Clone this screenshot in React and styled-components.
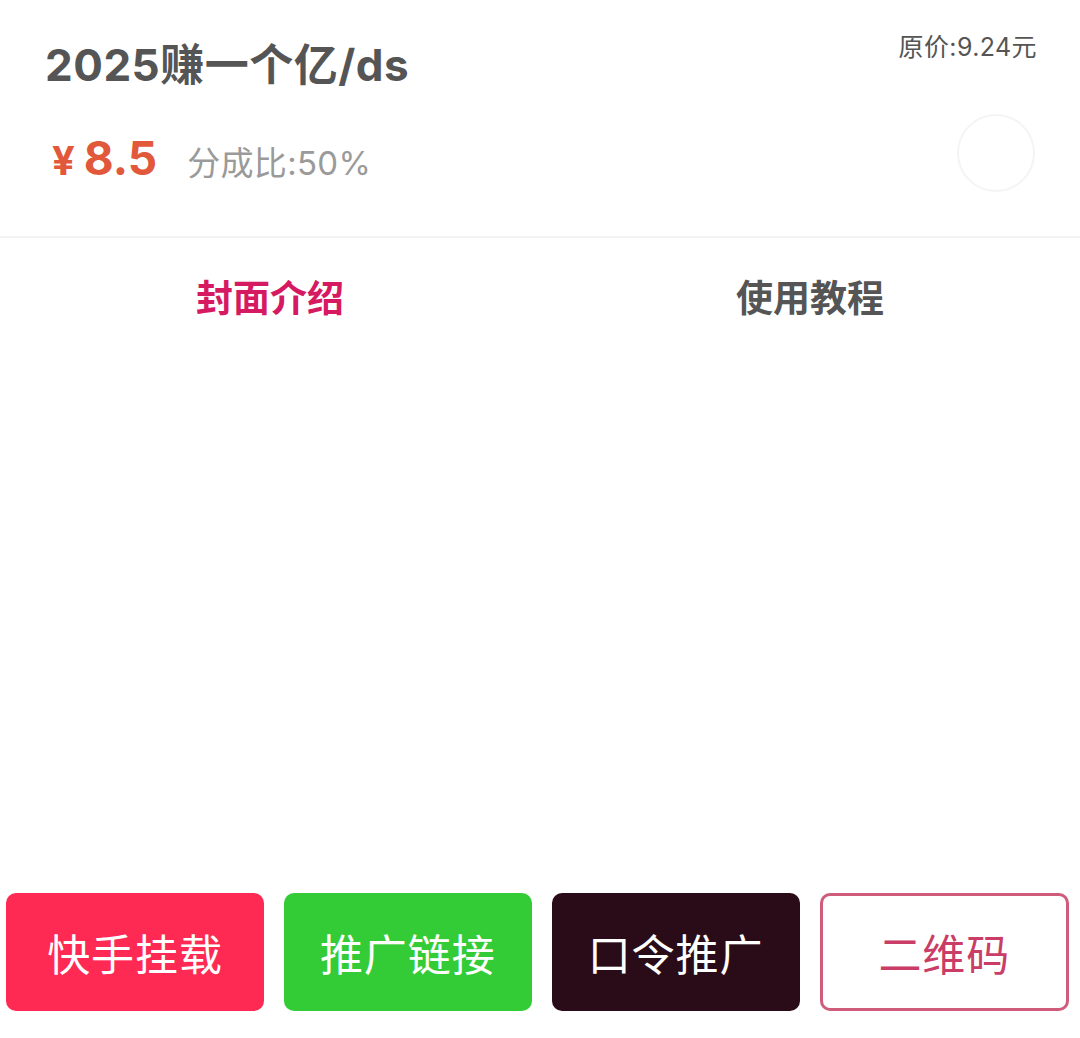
import React from 'react';
import styled, { createGlobalStyle } from 'styled-components';

const GlobalStyle = createGlobalStyle`
  html, body {
    margin: 0;
    padding: 0;
    background: #fff;
  }
  body {
    font-family: Inter, "Noto Sans CJK SC", "Noto Sans", sans-serif;
  }
`;

const Page = styled.div`
  display: flex;
  flex-direction: column;
  min-height: 1038px;
  background: #fff;
`;

const Header = styled.div`
  display: flex;
  justify-content: space-between;
  padding: 33px 43px 44px 45px;
  border-bottom: 2px solid #f3f3f3;
`;

const Left = styled.div`
  display: flex;
  flex-direction: column;
`;

const Title = styled.h1`
  margin: 6px 0 0;
  font-size: 44px;
  line-height: 53px;
  font-weight: 700;
  color: #555;
  letter-spacing: 0.5px;
`;

const PriceRow = styled.div`
  display: flex;
  align-items: baseline;
  gap: 30px;
  margin-top: 37px;
  padding-left: 7px;
  height: 58px;
`;

const Price = styled.span`
  font-size: 46px;
  line-height: 58px;
  font-weight: 700;
  color: #e2583a;
  .yen {
    font-size: 40px;
    margin-right: 9px;
  }
`;

const Share = styled.span`
  font-size: 33px;
  color: #9a9a9a;
  letter-spacing: 0.3px;
`;

const Right = styled.div`
  display: flex;
  flex-direction: column;
  align-items: flex-end;
`;

const Original = styled.span`
  font-size: 25px;
  line-height: 29px;
  color: #555;
  letter-spacing: 0.4px;
`;

const Avatar = styled.div`
  width: 74px;
  height: 74px;
  margin-top: 52px;
  margin-right: 2px;
  border-radius: 50%;
  border: 2px solid #f4f4f4;
`;

const Tabs = styled.div`
  display: grid;
  grid-template-columns: 1fr 1fr;
`;

const Tab = styled.div`
  height: 116px;
  display: flex;
  align-items: center;
  justify-content: center;
  font-size: 37px;
  font-weight: 700;
  color: ${(p) => (p.active ? '#d61a62' : '#555')};
`;

const Content = styled.div`
  flex: 1;
`;

const Footer = styled.div`
  display: grid;
  grid-template-columns: 258fr 247fr 248fr 249fr;
  gap: 20px;
  padding: 0 11px 27px 6px;
`;

const Button = styled.div`
  height: 118px;
  box-sizing: border-box;
  display: flex;
  align-items: center;
  justify-content: center;
  border-radius: 10px;
  font-size: 43px;
  letter-spacing: 1px;
  background: ${(p) => p.bg || '#fff'};
  color: ${(p) => p.fg || '#fff'};
  border: ${(p) => (p.outline ? `3px solid ${p.outline}` : 'none')};
`;

const buttons = [
  { label: '快手挂载', bg: '#fe2a54' },
  { label: '推广链接', bg: '#34cc36' },
  { label: '口令推广', bg: '#2a0c19' },
  { label: '二维码', bg: '#fff', fg: '#c93d66', outline: '#cf5c7a' },
];

const App = () => {
  return (
    <Page>
      <GlobalStyle />
      <Header>
        <Left>
          <Title>2025赚一个亿/ds</Title>
          <PriceRow>
            <Price>
              <span className="yen">¥</span>8.5
            </Price>
            <Share>分成比:50%</Share>
          </PriceRow>
        </Left>
        <Right>
          <Original>原价:9.24元</Original>
          <Avatar />
        </Right>
      </Header>
      <Tabs>
        <Tab active>封面介绍</Tab>
        <Tab>使用教程</Tab>
      </Tabs>
      <Content />
      <Footer>
        {buttons.map((b) => (
          <Button key={b.label} bg={b.bg} fg={b.fg} outline={b.outline}>
            {b.label}
          </Button>
        ))}
      </Footer>
    </Page>
  );
};

export default App;
